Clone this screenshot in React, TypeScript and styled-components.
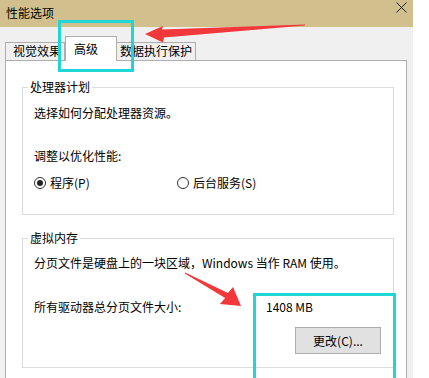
import { createGlobalStyle, styled } from "styled-components";

const colors = {
  titleBar: "#d1c08d",
  windowBody: "#f0f0f0",
  border: "#adadad",
  groupBorder: "#dcdcdc",
  text: "#000000",
  highlight: "#1ed6d6",
  arrow: "#f2383a",
  button: "#e1e1e1",
};

const GlobalStyle = createGlobalStyle`
  html, body {
    margin: 0;
    padding: 0;
    background: #ffffff;
  }
  body {
    font-family: "Noto Sans CJK SC", "Noto Sans", "Liberation Sans", sans-serif;
    font-size: 12px;
    color: ${colors.text};
  }
`;

const Page = styled.div`
  position: relative;
  width: 429px;
  height: 378px;
  overflow: hidden;
  background: #ffffff;
`;

const Window = styled.div`
  width: 413px;
  height: 378px;
  background: ${colors.windowBody};
  display: flex;
  flex-direction: column;
`;

const TitleBar = styled.div`
  height: 27px;
  flex: none;
  background: ${colors.titleBar};
  display: flex;
  justify-content: space-between;
  align-items: flex-start;
  padding: 0 6px 0 6px;
  box-sizing: border-box;
`;

const Title = styled.span`
  line-height: 16px;
  margin-top: 5px;
`;

const CloseIcon = styled.svg`
  margin-top: 2px;
`;

const TabStrip = styled.div`
  height: 33px;
  flex: none;
  display: flex;
  align-items: flex-end;
  padding-left: 5px;
`;

const Tab = styled.div<{ $active?: boolean; $width: number }>`
  position: relative;
  box-sizing: border-box;
  width: ${(p) => p.$width}px;
  height: ${(p) => (p.$active ? 25 : 18)}px;
  margin-bottom: ${(p) => (p.$active ? -1 : 0)}px;
  padding: ${(p) => (p.$active ? "4px 0 0 8px" : "0 0 0 3px")};
  border: 1px solid ${colors.border};
  border-bottom: none;
  border-left-width: ${(p) => (p.$active ? 1 : 0)}px;
  background: ${(p) => (p.$active ? "#ffffff" : colors.windowBody)};
  line-height: 16px;
  white-space: nowrap;
  overflow: hidden;
  z-index: ${(p) => (p.$active ? 1 : 0)};

  &:first-child {
    border-left-width: 1px;
    padding-left: 7px;
  }
`;

const Panel = styled.div`
  flex: 1;
  margin-left: 5px;
  width: 402px;
  box-sizing: border-box;
  border: 1px solid ${colors.border};
  border-bottom: none;
  background: #ffffff;
  padding: 26px 12px 0 16px;
  display: flex;
  flex-direction: column;
  gap: 23px;
`;

const GroupBox = styled.div<{ $pad: string }>`
  position: relative;
  border: 1px solid ${colors.groupBorder};
  padding: ${(p) => p.$pad};
  display: flex;
  flex-direction: column;
`;

const Legend = styled.span`
  position: absolute;
  top: -9px;
  left: 5px;
  padding: 0 2px;
  background: #ffffff;
  line-height: 16px;
`;

const Line = styled.div<{ $gap?: number }>`
  line-height: 16px;
  margin-top: ${(p) => p.$gap ?? 0}px;
  white-space: nowrap;
`;

const RadioRow = styled.div`
  margin-top: 11px;
  display: grid;
  grid-template-columns: 143px auto;
  line-height: 16px;
`;

const RadioItem = styled.label`
  display: flex;
  align-items: center;
  gap: 4px;
`;

const RadioCircle = styled.span<{ $checked?: boolean }>`
  width: 12px;
  height: 12px;
  box-sizing: border-box;
  border: 1px solid #333333;
  border-radius: 50%;
  display: flex;
  align-items: center;
  justify-content: center;

  &::after {
    content: "";
    width: 6px;
    height: 6px;
    border-radius: 50%;
    background: ${(p) => (p.$checked ? "#222222" : "transparent")};
  }
`;

const SizeRow = styled.div`
  margin-top: 28px;
  display: grid;
  grid-template-columns: 232px auto;
  line-height: 16px;
`;

const ButtonRow = styled.div`
  margin-top: 12px;
  display: flex;
  justify-content: flex-end;
  padding-right: 1px;
`;

const Button = styled.div`
  width: 86px;
  height: 27px;
  box-sizing: border-box;
  border: 1px solid ${colors.border};
  background: ${colors.button};
  display: flex;
  align-items: center;
  justify-content: center;
  line-height: 16px;
`;

const Highlight = styled.div<{ $left: number; $top: number; $w: number; $h: number }>`
  position: absolute;
  left: ${(p) => p.$left}px;
  top: ${(p) => p.$top}px;
  width: ${(p) => p.$w}px;
  height: ${(p) => p.$h}px;
  box-sizing: border-box;
  border: 3px solid ${colors.highlight};
  pointer-events: none;
`;

const ArrowLayer = styled.svg`
  position: absolute;
  left: 0;
  top: 0;
  pointer-events: none;
`;

const App = () => {
  return (
    <Page>
      <GlobalStyle />
      <Window>
        <TitleBar>
          <Title>性能选项</Title>
          <CloseIcon width="11" height="11" viewBox="0 0 11 11">
            <path d="M0.5 0.5 L10.5 10.5 M10.5 0.5 L0.5 10.5" stroke="#222" strokeWidth="1" fill="none" />
          </CloseIcon>
        </TitleBar>
        <TabStrip>
          <Tab $width={60}>视觉效果</Tab>
          <Tab $active $width={52}>高级</Tab>
          <Tab $width={79}>数据执行保护</Tab>
        </TabStrip>
        <Panel>
          <GroupBox $pad="17px 11px 23px">
            <Legend>处理器计划</Legend>
            <Line>选择如何分配处理器资源。</Line>
            <Line $gap={27}>调整以优化性能:</Line>
            <RadioRow>
              <RadioItem>
                <RadioCircle $checked />
                程序(P)
              </RadioItem>
              <RadioItem>
                <RadioCircle />
                后台服务(S)
              </RadioItem>
            </RadioRow>
          </GroupBox>
          <GroupBox $pad="16px 11px 13px">
            <Legend>虚拟内存</Legend>
            <Line>分页文件是硬盘上的一块区域，Windows 当作 RAM 使用。</Line>
            <SizeRow>
              <span>所有驱动器总分页文件大小:</span>
              <span>1408 MB</span>
            </SizeRow>
            <ButtonRow>
              <Button>更改(C)...</Button>
            </ButtonRow>
          </GroupBox>
        </Panel>
      </Window>
      <Highlight $left={58} $top={20} $w={76} $h={52} />
      <Highlight $left={253} $top={293} $w={143} $h={100} />
      <ArrowLayer width="429" height="378" viewBox="0 0 429 378">
        <polygon
          points="145,34 163,26 162,29.5 305,24.4 305,25.6 164,37.5 163,42.5"
          fill={colors.arrow}
        />
        <polygon
          points="241,306 233,287 227.9,292.9 185.2,272.6 184.8,273.4 225.1,298.1 220,304"
          fill={colors.arrow}
        />
      </ArrowLayer>
    </Page>
  );
};

export default App;
